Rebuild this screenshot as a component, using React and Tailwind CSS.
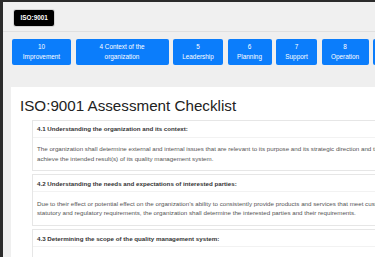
import React from 'react';

const sections = [
  { no: '10', name: 'Improvement', w: 'w-[59px]' },
  { no: '4', name: 'Context of the', rest: 'organization', w: 'w-[93px]' },
  { no: '5', name: 'Leadership', w: 'w-[50px]' },
  { no: '6', name: 'Planning', w: 'w-[44px]' },
  { no: '7', name: 'Support', w: 'w-[41px]' },
  { no: '8', name: 'Operation', w: 'w-[47px]' },
  { no: '9', name: 'Performance', w: 'w-[60px]' },
];

const clauses = [
  {
    title: '4.1 Understanding the organization and its context:',
    lines: [
      'The organization shall determine external and internal issues that are relevant to its purpose and its strategic direction and that affect its ability to',
      'achieve the intended result(s) of its quality management system.',
    ],
  },
  {
    title: '4.2 Understanding the needs and expectations of interested parties:',
    lines: [
      'Due to their effect or potential effect on the organization\u2019s ability to consistently provide products and services that meet customer and applicable',
      'statutory and regulatory requirements, the organization shall determine the interested parties and their requirements.',
    ],
  },
  {
    title: '4.3 Determining the scope of the quality management system:',
    lines: [
      'The organization shall determine the boundaries and applicability of the quality management system to establish its scope.',
    ],
  },
];

const App = () => {
  return (
    <div className="relative flex w-[375px] h-[257px] overflow-hidden bg-[#2b2b2b] font-['Liberation_Sans',Arial,sans-serif]">
      {/* dark window edge */}
      <div className="w-[3px] shrink-0 bg-[#2b2b2b]" />

      <div className="flex flex-col flex-1 min-w-0 mt-[2px] bg-[#efefef]">
        {/* --- HEADER --- */}
        <div className="flex items-start h-[30px] shrink-0 pl-[11px] pt-[8px] border-b border-[#e0e0e0] bg-[#f0f0f0]">
          <div className="h-[16px] px-[6.5px] rounded-[2px] bg-black ring-1 ring-[#d4d4d4] text-white text-[6.4px] leading-[16px] font-bold">
            ISO:9001
          </div>
        </div>

        {/* --- SECTION NAV --- */}
        <div className="flex gap-[4.5px] pl-[9px] pt-[7px] shrink-0">
          {sections.map((s) => (
            <button
              key={s.no}
              className={`${s.w} h-[26px] shrink-0 rounded-[2px] bg-[#0b7dfb] text-white text-[6.4px] leading-[9.6px] text-center whitespace-nowrap`}
            >
              {s.rest ? `${s.no} ${s.name}` : s.no}
              <br />
              {s.rest ? s.rest : s.name}
            </button>
          ))}
        </div>

        {/* --- CHECKLIST CARD --- */}
        <div className="ml-[8px] mt-[22px] w-[420px] shrink-0 bg-white pl-[9px] pt-[10px] pb-4">
          <h1 className="text-[15.2px] leading-[18px] text-[#222] whitespace-nowrap">ISO:9001 Assessment Checklist</h1>

          <div className="pl-[12px] mt-[4.5px] flex flex-col gap-[3.5px]">
            {clauses.map((c) => (
              <div key={c.title} className="border border-[#e6e6e6] bg-white">
                <div className="px-[4px] pt-[3.5px] pb-[3px] border-b border-[#f2f2f2] text-[6.2px] leading-[9.6px] font-bold text-[#333] whitespace-nowrap">
                  {c.title}
                </div>
                <div className="px-[4px] pt-[6.5px] pb-[6.5px] text-[6.2px] leading-[9.6px] text-[#555] whitespace-nowrap">
                  {c.lines.map((l, i) => (
                    <div key={i}>{l}</div>
                  ))}
                </div>
              </div>
            ))}
          </div>
        </div>
      </div>
    </div>
  );
};

export default App;
